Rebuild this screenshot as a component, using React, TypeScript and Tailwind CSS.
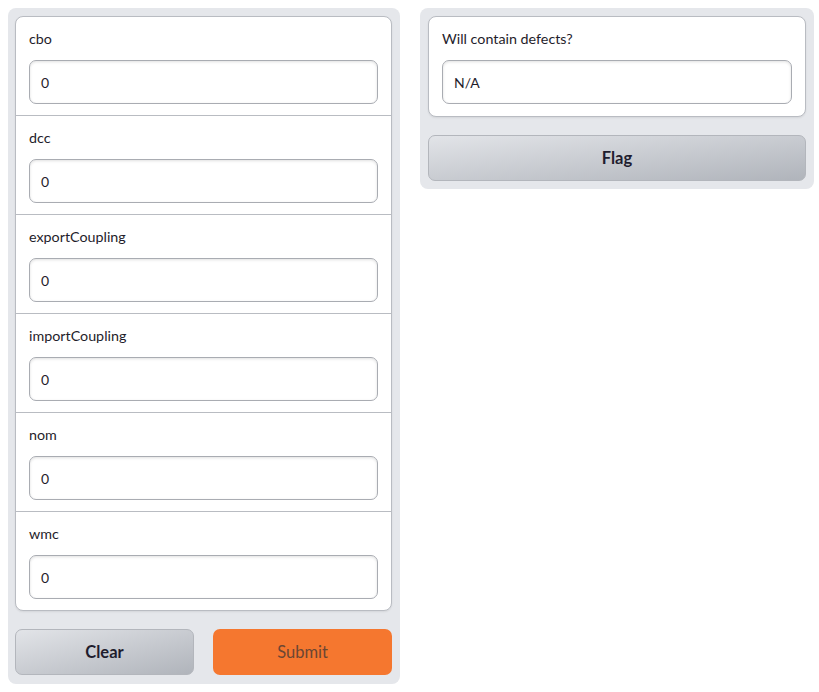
import React from 'react';

const fields = ['cbo', 'dcc', 'exportCoupling', 'importCoupling', 'nom', 'wmc'];

function Field({ label, value, last }: { label: string; value: string; last?: boolean }) {
  return (
    <div className={last ? 'px-[13px] pt-3 pb-3' : 'px-[13px] pt-3 pb-[11px]'}>
      <div className="h-5 text-[14.3px] leading-5 text-[#1f1d2b] mb-[11px]">{label}</div>
      <div className="h-[44px] rounded-[7px] border border-[#a9acb2] bg-white shadow-[inset_0_1px_3px_rgba(0,0,0,0.12)] flex items-center px-[11px] text-[14px] text-[#1f1d2b]">
        {value}
      </div>
    </div>
  );
}

export default function App() {
  return (
    <div
      className="w-[819px] h-[692px] bg-white grid grid-cols-[392px_394px] gap-5 pl-2 pt-2 items-start"
      style={{ fontFamily: 'Lato, "Noto Sans", sans-serif' }}
    >
      {/* Left: inputs */}
      <div className="bg-[#e5e7eb] rounded-[8px] pl-[7px] pr-[8px] pt-2 pb-[9px] flex flex-col gap-[18px]">
        <div className="bg-white rounded-[8px] border border-[#b9bcc2] shadow-[0_1px_2px_rgba(0,0,0,0.08)] divide-y divide-[#b9bcc2]">
          {fields.map((f) => (
            <Field key={f} label={f} value="0" />
          ))}
        </div>
        <div className="grid grid-cols-2 gap-[19px]">
          <button className="h-[46px] rounded-[7px] border border-[#b3b6bc] bg-gradient-to-br from-[#e2e4e8] to-[#b0b4bb] text-[16.5px] font-bold text-[#1f1d2e]">
            Clear
          </button>
          <button className="h-[46px] rounded-[7px] bg-[#f5772f] text-[16.5px] font-normal text-[#6b4633]">
            Submit
          </button>
        </div>
      </div>

      {/* Right: output */}
      <div className="bg-[#e5e7eb] rounded-[8px] px-2 pt-2 pb-2 flex flex-col gap-[18px]">
        <div className="bg-white rounded-[8px] border border-[#b9bcc2] shadow-[0_1px_2px_rgba(0,0,0,0.08)]">
          <Field label="Will contain defects?" value="N/A" last />
        </div>
        <button className="h-[46px] rounded-[7px] border border-[#b3b6bc] bg-gradient-to-br from-[#e2e4e8] to-[#b0b4bb] text-[16.5px] font-bold text-[#1f1d2e]">
          Flag
        </button>
      </div>
    </div>
  );
}
